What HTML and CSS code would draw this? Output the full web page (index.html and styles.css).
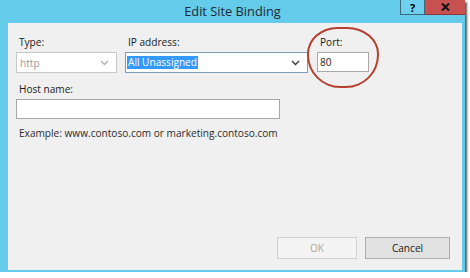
FILE: index.html
```html
<!DOCTYPE html>
<html lang="en">
<head>
    <meta charset="UTF-8">
    <title>Edit Site Binding</title>
    <link rel="stylesheet" href="styles.css">
</head>
<body>
    <div class="window">
        <div class="titlebar">
            <span class="title">Edit Site Binding</span>
            <div class="caption-btns">
                <span class="help">?</span>
                <span class="close">
                    <svg width="9" height="8" viewBox="0 0 9 8"><path d="M1,0.5 L8,7.5 M8,0.5 L1,7.5" stroke="#111" stroke-width="2"/></svg>
                </span>
            </div>
        </div>

        <div class="client">
            <div class="top-row">
                <div class="field type-field">
                    <label>Type:</label>
                    <div class="select disabled">
                        <span>http</span>
                        <svg width="9" height="6" viewBox="0 0 9 6"><polyline points="1,1 4.5,4.5 8,1" fill="none" stroke="#b0b0b0" stroke-width="1.3"/></svg>
                    </div>
                </div>
                <div class="field ip-field">
                    <label>IP address:</label>
                    <div class="select focused">
                        <span class="selected">All Unassigned</span>
                        <svg width="9" height="6" viewBox="0 0 9 6"><polyline points="1,1 4.5,4.5 8,1" fill="none" stroke="#333" stroke-width="1.3"/></svg>
                    </div>
                </div>
                <div class="field port-field">
                    <label>Port:</label>
                    <div class="textbox">80</div>
                </div>
            </div>

            <div class="field host-field">
                <label>Host name:</label>
                <div class="textbox"></div>
            </div>
            <p class="example">Example: www.contoso.com or marketing.contoso.com</p>

            <div class="buttons">
                <button disabled>OK</button>
                <button>Cancel</button>
            </div>

            <!-- hand drawn marker around the port box -->
            <div class="marker"></div>
        </div>
    </div>
</body>
</html>
```

FILE: styles.css
```css
/* Page */
body {
    margin: 0;
    background: #fff;
    font-family: 'Open Sans', 'Liberation Sans', sans-serif;
    font-size: 10.1px;
    color: #1a1a1a;
}

/* Window frame */
.window {
    width: 465px;
    height: 272px;
    background: #64cbea;
    box-shadow: 2px 2px 2px rgba(0, 0, 0, 0.65);
    display: flex;
    flex-direction: column;
}

.titlebar {
    height: 23px;
    display: grid;
    grid-template-columns: 1fr auto 1fr;
}

.title {
    grid-column: 2;
    font-size: 12.8px;
    line-height: 22px;
    color: #1e2a33;
}

.caption-btns {
    grid-column: 3;
    justify-self: end;
    display: flex;
    height: 15px;
}

.caption-btns span {
    display: flex;
    align-items: center;
    justify-content: center;
    font-weight: bold;
    box-sizing: border-box;
}

.help {
    width: 25px;
    background: #6fd0ee;
    border: 1px solid #3c6a7c;
    border-top: none;
    font-size: 11px;
    color: #000;
}

.close {
    width: 40px;
    background: #c75050;
    border-bottom: 1px solid #8c3a3a;
}

/* Client area */
.client {
    position: relative;
    flex: 1;
    margin: 0 3px 2px 8px;
    background: #f0f0f0;
    border-left: 1px solid #f8e8e8;
    padding: 12px 12px 11px 7px;
    display: flex;
    flex-direction: column;
}

.top-row {
    display: flex;
    gap: 8px;
}

.field label {
    display: block;
    line-height: 15px;
    padding-left: 3px;
    margin-bottom: 2px;
}

.select {
    height: 21px;
    box-sizing: border-box;
    background: #fff;
    border: 1px solid #c9c9c9;
    display: flex;
    align-items: center;
    justify-content: space-between;
    padding: 0 7px 0 3px;
}

.select.disabled {
    color: #9a9a9a;
}

.select.focused {
    border-color: #7d9dbd;
    padding-left: 1px;
}

.selected {
    background: #3399ff;
    color: #fff;
    padding: 0 1px;
    line-height: 13px;
}

.type-field { width: 101px; }
.ip-field { width: 183px; }
.port-field { width: 52px; margin-left: 1px; }

.textbox {
    height: 20px;
    box-sizing: border-box;
    background: #fff;
    border: 1px solid #a8a8a8;
    line-height: 18px;
    padding-left: 2px;
}

.host-field {
    width: 264px;
    margin-top: 9px;
}

.example {
    margin: 7px 0 0;
    padding-left: 3px;
    line-height: 15px;
    color: #2a2a2a;
}

/* Dialog buttons */
.buttons {
    margin-top: auto;
    display: flex;
    justify-content: flex-end;
    gap: 8px;
}

button {
    height: 22px;
    font-family: inherit;
    font-size: 10.1px;
    background: #e1e1e1;
    border: 1px solid #adadad;
    color: #1a1a1a;
    padding: 0;
}

button:first-child { width: 80px; }
button:last-child { width: 85px; }

button:disabled {
    background: #f4f4f4;
    border-color: #d0d0d0;
    color: #a8a8a8;
}

/* Red annotation circle */
.marker {
    position: absolute;
    left: 298px;
    top: 4px;
    width: 68px;
    height: 57px;
    border: 2px solid #b4412f;
    border-radius: 42% 44% 46% 46% / 44% 44% 54% 54%;
}
```
